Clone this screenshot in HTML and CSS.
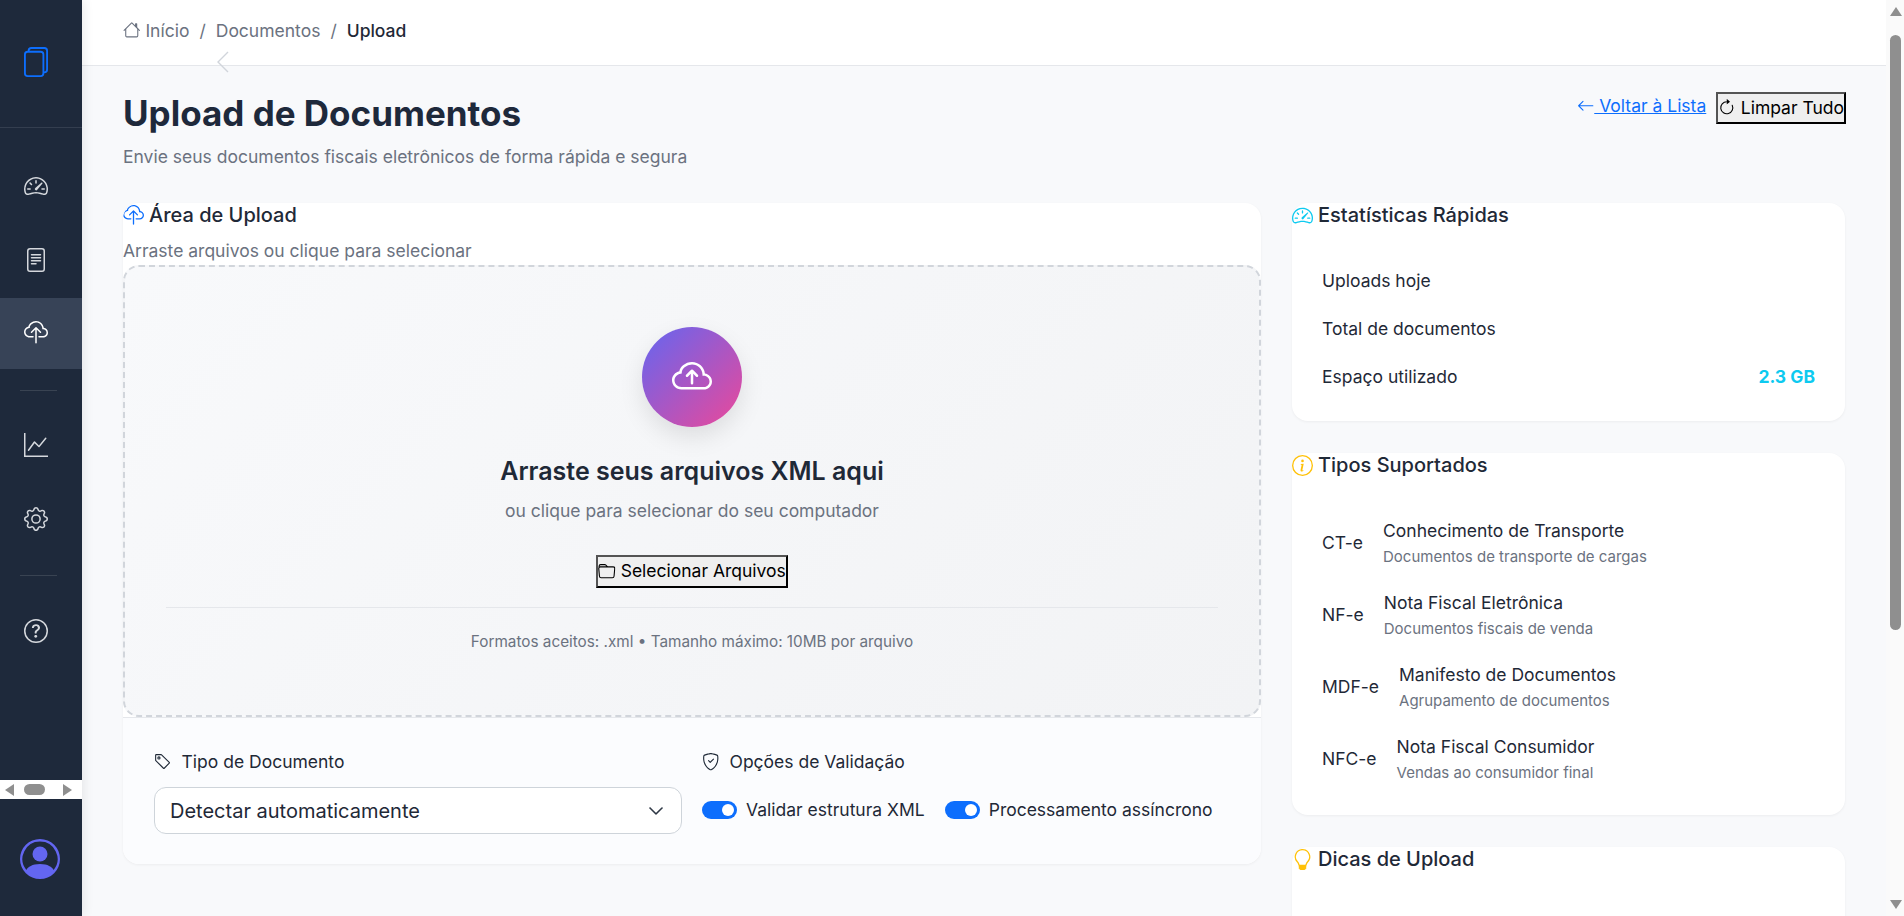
FILE: index.html
```html
<!DOCTYPE html>
<html lang="pt-BR">
<head>
<meta charset="utf-8">
<title>Upload de Documentos</title>
<link rel="stylesheet" href="styles.css">
</head>
<body>
<svg class="sprite" xmlns="http://www.w3.org/2000/svg">
  <symbol id="i-files" viewBox="2 0 13 16" preserveAspectRatio="none"><path d="M13 0H6a2 2 0 0 0-2 2 2 2 0 0 0-2 2v10a2 2 0 0 0 2 2h7a2 2 0 0 0 2-2 2 2 0 0 0 2-2V2a2 2 0 0 0-2-2zm0 13V4a2 2 0 0 0-2-2H5a1 1 0 0 1 1-1h7a1 1 0 0 1 1 1v10a1 1 0 0 1-1 1zM3 4a1 1 0 0 1 1-1h7a1 1 0 0 1 1 1v10a1 1 0 0 1-1 1H4a1 1 0 0 1-1-1V4z"/></symbol>
  <symbol id="i-speed" viewBox="0 0 16 16"><path d="M8 4a.5.5 0 0 1 .5.5V6a.5.5 0 0 1-1 0V4.5A.5.5 0 0 1 8 4zM3.732 5.732a.5.5 0 0 1 .707 0l.915.914a.5.5 0 1 1-.708.708l-.914-.915a.5.5 0 0 1 0-.707zM2 10a.5.5 0 0 1 .5-.5h1.586a.5.5 0 0 1 0 1H2.5A.5.5 0 0 1 2 10zm9.5 0a.5.5 0 0 1 .5-.5h1.5a.5.5 0 0 1 0 1H12a.5.5 0 0 1-.5-.5zm.754-4.246a.389.389 0 0 0-.527-.02L7.547 9.31a.91.91 0 1 0 1.302 1.258l3.434-4.297a.389.389 0 0 0-.029-.518z"/><path fill-rule="evenodd" d="M0 10a8 8 0 1 1 15.547 2.661c-.442 1.253-1.845 1.602-2.932 1.25C11.309 13.488 9.475 13 8 13c-1.474 0-3.31.488-4.615.911-1.087.352-2.49.003-2.932-1.25A7.988 7.988 0 0 1 0 10zm8-7a7 7 0 0 0-6.603 9.329c.203.575.923.876 1.68.63C4.397 12.533 6.358 12 8 12s3.604.532 4.923.96c.757.245 1.477-.056 1.68-.631A7 7 0 0 0 8 3z"/></symbol>
  <symbol id="i-file" viewBox="0 0 16 16"><path d="M5 4a.5.5 0 0 0 0 1h6a.5.5 0 0 0 0-1H5zm-.5 2.5A.5.5 0 0 1 5 6h6a.5.5 0 0 1 0 1H5a.5.5 0 0 1-.5-.5zM5 8a.5.5 0 0 0 0 1h6a.5.5 0 0 0 0-1H5zm0 2a.5.5 0 0 0 0 1h3a.5.5 0 0 0 0-1H5z"/><path d="M2 2a2 2 0 0 1 2-2h8a2 2 0 0 1 2 2v12a2 2 0 0 1-2 2H4a2 2 0 0 1-2-2V2zm10-1H4a1 1 0 0 0-1 1v12a1 1 0 0 0 1 1h8a1 1 0 0 0 1-1V2a1 1 0 0 0-1-1z"/></symbol>
  <symbol id="i-cloud" viewBox="0 0 16 16"><path fill-rule="evenodd" d="M4.406 1.342A5.53 5.53 0 0 1 8 0c2.69 0 4.923 2 5.166 4.579C14.758 4.804 16 6.137 16 7.773 16 9.569 14.502 11 12.687 11H10a.5.5 0 0 1 0-1h2.688C13.979 10 15 8.988 15 7.773c0-1.216-1.02-2.228-2.313-2.228h-.5v-.5C12.188 2.825 10.328 1 8 1a4.53 4.53 0 0 0-2.941 1.1c-.757.652-1.153 1.438-1.153 2.055v.448l-.445.049C2.064 4.805 1 5.952 1 7.318 1 8.785 2.23 10 3.781 10H6a.5.5 0 0 1 0 1H3.781C1.708 11 0 9.366 0 7.318c0-1.763 1.266-3.223 2.942-3.593.143-.863.698-1.723 1.464-2.383z"/><path fill-rule="evenodd" d="M7.646 4.146a.5.5 0 0 1 .708 0l3 3a.5.5 0 0 1-.708.708L8.5 5.707V14.5a.5.5 0 0 1-1 0V5.707L5.354 7.854a.5.5 0 1 1-.708-.708l3-3z"/></symbol>
  <symbol id="i-cloud-arrow" viewBox="0 0 16 16"><path fill-rule="evenodd" d="M7.646 5.146a.5.5 0 0 1 .708 0l2 2a.5.5 0 0 1-.708.708L8.5 6.707V10.5a.5.5 0 0 1-1 0V6.707L6.354 7.854a.5.5 0 1 1-.708-.708l2-2z"/><path d="M4.406 3.342A5.53 5.53 0 0 1 8 2c2.69 0 4.923 2 5.166 4.579C14.758 6.804 16 8.137 16 9.773 16 11.569 14.502 13 12.687 13H3.781C1.708 13 0 11.366 0 9.318c0-1.763 1.266-3.223 2.942-3.593.143-.863.698-1.723 1.464-2.383zm.653.757c-.757.653-1.153 1.44-1.153 2.056v.448l-.445.049C2.064 6.805 1 7.952 1 9.318 1 10.785 2.23 12 3.781 12h8.906C13.98 12 15 10.988 15 9.773c0-1.216-1.02-2.228-2.313-2.228h-.5v-.5C12.188 4.825 10.328 3 8 3a4.53 4.53 0 0 0-2.941 1.1z"/></symbol>
  <symbol id="i-graph" viewBox="0 0 16 16"><path fill-rule="evenodd" d="M0 0h1v15h15v1H0V0Zm14.817 3.113a.5.5 0 0 1 .07.704l-4.5 5.5a.5.5 0 0 1-.74.037L7.06 6.767l-3.656 5.027a.5.5 0 0 1-.808-.588l4-5.5a.5.5 0 0 1 .758-.06l2.609 2.61 4.15-5.073a.5.5 0 0 1 .704-.07Z"/></symbol>
  <symbol id="i-gear" viewBox="0 0 16 16"><path d="M8 4.754a3.246 3.246 0 1 0 0 6.492 3.246 3.246 0 0 0 0-6.492zM5.754 8a2.246 2.246 0 1 1 4.492 0 2.246 2.246 0 0 1-4.492 0z"/><path d="M9.796 1.343c-.527-1.79-3.065-1.79-3.592 0l-.094.319a.873.873 0 0 1-1.255.52l-.292-.16c-1.64-.892-3.433.902-2.54 2.541l.159.292a.873.873 0 0 1-.52 1.255l-.319.094c-1.79.527-1.79 3.065 0 3.592l.319.094a.873.873 0 0 1 .52 1.255l-.16.292c-.892 1.64.901 3.434 2.541 2.54l.292-.159a.873.873 0 0 1 1.255.52l.094.319c.527 1.79 3.065 1.79 3.592 0l.094-.319a.873.873 0 0 1 1.255-.52l.292.16c1.64.893 3.434-.902 2.54-2.541l-.159-.292a.873.873 0 0 1 .52-1.255l.319-.094c1.79-.527 1.79-3.065 0-3.592l-.319-.094a.873.873 0 0 1-.52-1.255l.16-.292c.893-1.64-.902-3.433-2.541-2.54l-.292.159a.873.873 0 0 1-1.255-.52l-.094-.319zm-2.633.283c.246-.835 1.428-.835 1.674 0l.094.319a1.873 1.873 0 0 0 2.693 1.115l.291-.16c.764-.415 1.6.42 1.184 1.185l-.159.292a1.873 1.873 0 0 0 1.116 2.692l.318.094c.835.246.835 1.428 0 1.674l-.319.094a1.873 1.873 0 0 0-1.115 2.693l.16.291c.415.764-.42 1.6-1.185 1.184l-.291-.159a1.873 1.873 0 0 0-2.693 1.116l-.094.318c-.246.835-1.428.835-1.674 0l-.094-.319a1.873 1.873 0 0 0-2.692-1.115l-.292.16c-.764.415-1.6-.42-1.184-1.185l.159-.291A1.873 1.873 0 0 0 1.945 8.93l-.319-.094c-.835-.246-.835-1.428 0-1.674l.319-.094A1.873 1.873 0 0 0 3.06 4.377l-.16-.292c-.415-.764.42-1.6 1.185-1.184l.292.159a1.873 1.873 0 0 0 2.692-1.115l.094-.319z"/></symbol>
  <symbol id="i-help" viewBox="0 0 16 16"><path d="M8 15A7 7 0 1 1 8 1a7 7 0 0 1 0 14zm0 1A8 8 0 1 0 8 0a8 8 0 0 0 0 16z"/><path d="M5.255 5.786a.237.237 0 0 0 .241.247h.825c.138 0 .248-.113.266-.25.09-.656.54-1.134 1.342-1.134.686 0 1.314.343 1.314 1.168 0 .635-.374.927-.965 1.371-.673.489-1.206 1.06-1.168 1.987l.003.217a.25.25 0 0 0 .25.246h.811a.25.25 0 0 0 .25-.25v-.105c0-.718.273-.927 1.01-1.486.609-.463 1.244-.977 1.244-2.056 0-1.511-1.276-2.241-2.673-2.241-1.267 0-2.655.59-2.75 2.286zm1.557 5.763c0 .533.425.927 1.01.927.609 0 1.028-.394 1.028-.927 0-.552-.42-.94-1.029-.94-.584 0-1.009.388-1.009.94z"/></symbol>
  <symbol id="i-person" viewBox="0 0 16 16"><path d="M11 6a3 3 0 1 1-6 0 3 3 0 0 1 6 0z"/><path fill-rule="evenodd" d="M0 8a8 8 0 1 1 16 0A8 8 0 0 1 0 8zm8-7a7 7 0 0 0-5.468 11.37C3.242 11.226 4.805 10 8 10s4.757 1.225 5.468 2.37A7 7 0 0 0 8 1z"/></symbol>
  <symbol id="i-house" viewBox="0 0 16 16"><path d="M8.707 1.5a1 1 0 0 0-1.414 0L.646 8.146a.5.5 0 0 0 .708.708L2 8.207V13.5A1.5 1.5 0 0 0 3.5 15h9a1.5 1.5 0 0 0 1.5-1.5V8.207l.646.647a.5.5 0 0 0 .708-.708L13 5.793V2.5a.5.5 0 0 0-.5-.5h-1a.5.5 0 0 0-.5.5v1.293L8.707 1.5ZM13 7.207V13.5a.5.5 0 0 1-.5.5h-9a.5.5 0 0 1-.5-.5V7.207l5-5 5 5Z"/></symbol>
  <symbol id="i-left" viewBox="0 0 16 16"><path fill-rule="evenodd" d="M15 8a.5.5 0 0 0-.5-.5H2.707l3.147-3.146a.5.5 0 1 0-.708-.708l-4 4a.5.5 0 0 0 0 .708l4 4a.5.5 0 0 0 .708-.708L2.707 8.5H14.5A.5.5 0 0 0 15 8z"/></symbol>
  <symbol id="i-reset" viewBox="0 0 16 16"><path fill-rule="evenodd" d="M8 3a5 5 0 1 0 4.546 2.914.5.5 0 0 1 .908-.417A6 6 0 1 1 8 2v1z"/><path d="M8 4.466V.534a.25.25 0 0 1 .41-.192l2.36 1.966c.12.1.12.284 0 .384L8.41 4.658A.25.25 0 0 1 8 4.466z"/></symbol>
  <symbol id="i-folder" viewBox="0 0 16 16"><path d="M.54 3.87.5 3a2 2 0 0 1 2-2h3.672a2 2 0 0 1 1.414.586l.828.828A2 2 0 0 0 9.828 3h3.982a2 2 0 0 1 1.992 2.181l-.637 7A2 2 0 0 1 13.174 14H2.826a2 2 0 0 1-1.991-1.819l-.637-7a1.99 1.99 0 0 1 .342-1.31zM2.19 4a1 1 0 0 0-.996 1.09l.637 7a1 1 0 0 0 .995.91h10.348a1 1 0 0 0 .995-.91l.637-7A1 1 0 0 0 13.81 4H2.19zm4.69-1.707A1 1 0 0 0 6.172 2H2.5a1 1 0 0 0-1 .981l.006.139C1.72 3.042 1.95 3 2.19 3h5.396l-.707-.707z"/></symbol>
  <symbol id="i-tag" viewBox="0 0 16 16"><path d="M6 4.5a1.5 1.5 0 1 1-3 0 1.5 1.5 0 0 1 3 0zm-1 0a.5.5 0 1 0-1 0 .5.5 0 0 0 1 0z"/><path d="M2 1h4.586a1 1 0 0 1 .707.293l7 7a1 1 0 0 1 0 1.414l-4.586 4.586a1 1 0 0 1-1.414 0l-7-7A1 1 0 0 1 1 6.586V2a1 1 0 0 1 1-1zm0 5.586 7 7L13.586 9l-7-7H2v4.586z"/></symbol>
  <symbol id="i-shield" viewBox="0 0 16 16"><path d="M5.338 1.59a61.44 61.44 0 0 0-2.837.856.481.481 0 0 0-.328.39c-.554 4.157.726 7.19 2.253 9.188a10.725 10.725 0 0 0 2.287 2.233c.346.244.652.42.893.533.12.057.218.095.293.118a.55.55 0 0 0 .101.025.615.615 0 0 0 .1-.025c.076-.023.174-.061.294-.118.24-.113.547-.29.893-.533a10.726 10.726 0 0 0 2.287-2.233c1.527-1.997 2.807-5.031 2.253-9.188a.48.48 0 0 0-.328-.39c-.651-.213-1.75-.56-2.837-.855C9.552 1.29 8.531 1.067 8 1.067c-.53 0-1.552.223-2.662.524zM5.072.56C6.157.265 7.31 0 8 0s1.843.265 2.928.56c1.11.3 2.229.655 2.887.87a1.54 1.54 0 0 1 1.044 1.262c.596 4.477-.787 7.795-2.465 9.99a11.775 11.775 0 0 1-2.517 2.453 7.159 7.159 0 0 1-1.048.625c-.28.132-.581.24-.829.24s-.548-.108-.829-.24a7.158 7.158 0 0 1-1.048-.625 11.777 11.777 0 0 1-2.517-2.453C1.928 10.487.545 7.169 1.141 2.692A1.54 1.54 0 0 1 2.185 1.43 62.456 62.456 0 0 1 5.072.56z"/><path d="M10.854 5.146a.5.5 0 0 1 0 .708l-3 3a.5.5 0 0 1-.708 0l-1.5-1.5a.5.5 0 1 1 .708-.708L7.5 7.793l2.646-2.647a.5.5 0 0 1 .708 0z"/></symbol>
  <symbol id="i-info" viewBox="0 0 16 16"><path d="M8 15A7 7 0 1 1 8 1a7 7 0 0 1 0 14zm0 1A8 8 0 1 0 8 0a8 8 0 0 0 0 16z"/><path d="m8.93 6.588-2.29.287-.082.38.45.083c.294.07.352.176.288.469l-.738 3.468c-.194.897.105 1.319.808 1.319.545 0 1.178-.252 1.465-.598l.088-.42c-.2.176-.492.246-.686.246-.275 0-.375-.193-.304-.533L8.93 6.588zM9 4.5a1 1 0 1 1-2 0 1 1 0 0 1 2 0z"/></symbol>
  <symbol id="i-bulb" viewBox="0 0 16 16"><path d="M2 6a6 6 0 1 1 10.174 4.31c-.203.196-.359.4-.453.619l-.762 1.769A.5.5 0 0 1 10.5 13a.5.5 0 0 1 0 1 .5.5 0 0 1 0 1l-.224.447a1 1 0 0 1-.894.553H6.618a1 1 0 0 1-.894-.553L5.5 15a.5.5 0 0 1 0-1 .5.5 0 0 1 0-1 .5.5 0 0 1-.46-.302l-.761-1.77a1.964 1.964 0 0 0-.453-.618A5.984 5.984 0 0 1 2 6zm6-5a5 5 0 0 0-3.479 8.592c.263.254.514.564.676.941L5.83 12h4.342l.632-1.467c.162-.377.413-.687.676-.941A5 5 0 0 0 8 1z"/></symbol>
  <symbol id="i-down" viewBox="0 0 16 16"><path fill-rule="evenodd" d="M1.646 4.646a.5.5 0 0 1 .708 0L8 10.293l5.646-5.647a.5.5 0 0 1 .708.708l-6 6a.5.5 0 0 1-.708 0l-6-6a.5.5 0 0 1 0-.708z"/></symbol>
</svg>

<div class="app">
  <aside class="sidebar">
    <div class="brand"><svg class="brand-icon"><use href="#i-files"/></svg></div>
    <nav class="nav">
      <a class="nav-item"><svg class="nav-icon"><use href="#i-speed"/></svg></a>
      <a class="nav-item"><svg class="nav-icon"><use href="#i-file"/></svg></a>
      <a class="nav-item is-active"><svg class="nav-icon"><use href="#i-cloud"/></svg></a>
      <hr class="nav-sep">
      <a class="nav-item"><svg class="nav-icon"><use href="#i-graph"/></svg></a>
      <a class="nav-item"><svg class="nav-icon"><use href="#i-gear"/></svg></a>
      <hr class="nav-sep">
      <a class="nav-item"><svg class="nav-icon"><use href="#i-help"/></svg></a>
    </nav>
    <div class="hscroll">
      <span class="hscroll-left"></span>
      <span class="hscroll-thumb"></span>
      <span class="hscroll-right"></span>
    </div>
    <div class="account"><svg class="avatar"><use href="#i-person"/></svg></div>
  </aside>

  <div class="main">
    <header class="topbar">
      <ol class="crumbs">
        <li class="crumb"><svg class="crumb-icon"><use href="#i-house"/></svg> Início</li>
        <li class="crumb-sep">/</li>
        <li class="crumb">Documentos</li>
        <li class="crumb-sep">/</li>
        <li class="crumb crumb-current">Upload</li>
      </ol>
      <svg class="collapse" viewBox="0 0 12 22"><polyline points="11,1 1,11 11,21"/></svg>
    </header>

    <main class="content">
      <div class="page-head">
        <div>
          <h1 class="page-title">Upload de Documentos</h1>
          <p class="page-sub">Envie seus documentos fiscais eletrônicos de forma rápida e segura</p>
        </div>
        <div class="page-actions">
          <a class="back-link" href="#"><svg class="icon16"><use href="#i-left"/></svg> Voltar à Lista</a>
          <button class="raw-btn" type="button"><svg class="icon16"><use href="#i-reset"/></svg>Limpar Tudo</button>
        </div>
      </div>

      <div class="columns">
        <section class="card upload-card">
          <h2 class="card-title"><svg class="title-icon c-blue"><use href="#i-cloud"/></svg>Área de Upload</h2>
          <p class="card-sub">Arraste arquivos ou clique para selecionar</p>
          <div class="dropzone">
            <div class="drop-circle"><svg class="drop-cloud"><use href="#i-cloud-arrow"/></svg></div>
            <h3 class="drop-title">Arraste seus arquivos XML aqui</h3>
            <p class="drop-sub">ou clique para selecionar do seu computador</p>
            <button class="raw-btn" type="button"><svg class="icon16"><use href="#i-folder"/></svg>Selecionar Arquivos</button>
            <p class="drop-note">Formatos aceitos: .xml • Tamanho máximo: 10MB por arquivo</p>
          </div>
          <div class="upload-options">
            <div class="option-col">
              <div class="option-label"><svg class="icon16"><use href="#i-tag"/></svg>Tipo de Documento</div>
              <div class="select-wrap">
                <select class="doc-select">
                  <option>Detectar automaticamente</option>
                </select>
                <svg class="select-chevron"><use href="#i-down"/></svg>
              </div>
            </div>
            <div class="option-col option-col-right">
              <div class="option-label"><svg class="icon16"><use href="#i-shield"/></svg>Opções de Validação</div>
              <div class="toggles">
                <label class="toggle"><span class="switch"></span>Validar estrutura XML</label>
                <label class="toggle"><span class="switch"></span>Processamento assíncrono</label>
              </div>
            </div>
          </div>
        </section>

        <div class="side">
          <section class="card stats-card">
            <h2 class="card-title"><svg class="title-icon c-cyan"><use href="#i-speed"/></svg>Estatísticas Rápidas</h2>
            <ul class="stats">
              <li class="stat">Uploads hoje</li>
              <li class="stat">Total de documentos</li>
              <li class="stat">Espaço utilizado <b class="stat-value">2.3 GB</b></li>
            </ul>
          </section>
          <section class="card types-card">
            <h2 class="card-title"><svg class="title-icon c-amber"><use href="#i-info"/></svg>Tipos Suportados</h2>
            <ul class="types">
              <li class="type"><span class="type-code">CT-e</span><div><div class="type-name">Conhecimento de Transporte</div><div class="type-desc">Documentos de transporte de cargas</div></div></li>
              <li class="type"><span class="type-code">NF-e</span><div><div class="type-name">Nota Fiscal Eletrônica</div><div class="type-desc">Documentos fiscais de venda</div></div></li>
              <li class="type"><span class="type-code">MDF-e</span><div><div class="type-name">Manifesto de Documentos</div><div class="type-desc">Agrupamento de documentos</div></div></li>
              <li class="type"><span class="type-code">NFC-e</span><div><div class="type-name">Nota Fiscal Consumidor</div><div class="type-desc">Vendas ao consumidor final</div></div></li>
            </ul>
          </section>
          <section class="card tips-card">
            <h2 class="card-title"><svg class="title-icon c-amber"><use href="#i-bulb"/></svg>Dicas de Upload</h2>
          </section>
        </div>
      </div>
    </main>
  </div>

  <div class="vscroll">
    <span class="vscroll-up"></span>
    <span class="vscroll-thumb"></span>
    <span class="vscroll-down"></span>
  </div>
</div>
</body>
</html>
```

FILE: styles.css
```css
* { box-sizing: border-box; }
html, body { margin: 0; height: 100%; overflow: hidden; }
body { font-family: Inter, "Liberation Sans", sans-serif; font-size: 17.5px; line-height: 1.5; color: #1f2937; background: #f8f9fb; }
svg { fill: currentColor; }
.sprite { display: none; }

.app { display: flex; height: 916px; overflow: hidden; }

/* Sidebar */
.sidebar { width: 82px; flex: none; display: flex; flex-direction: column; background: #1e293b; color: #d5d8dd; box-shadow: 2px 0 10px rgba(0,0,0,.08); z-index: 2; }
.brand { height: 128px; flex: none; padding: 47px 0 0 24px; border-bottom: 1px solid rgba(255,255,255,.1); }
.brand-icon { display: block; width: 24px; height: 30px; color: #0d6efd; }
.nav { flex: 1; padding-top: 22px; display: flex; flex-direction: column; gap: 3px; }
.nav-item { height: 71px; flex: none; display: flex; align-items: center; padding-left: 24px; }
.nav-item.is-active { background: #374357; color: #fff; padding-bottom: 2px; }
.nav-icon { width: 24px; height: 24px; }
.nav-sep { width: 37px; height: 1px; margin: 17.5px 0 16px 20px; border: 0; background: rgba(255,255,255,.12); flex: none; }

.hscroll { height: 19px; flex: none; background: #fff; display: flex; align-items: center; position: relative; }
.hscroll-left { margin-left: 5px; border-style: solid; border-width: 6px 9px 6px 0; border-color: transparent #8f8f8f transparent transparent; }
.hscroll-thumb { margin-left: 10px; width: 21px; height: 11px; border-radius: 6px; background: #8f8f8f; }
.hscroll-right { margin-left: 18px; border-style: solid; border-width: 6px 0 6px 9px; border-color: transparent transparent transparent #8f8f8f; }
.account { height: 117px; flex: none; padding: 40px 0 0 20px; }
.avatar { display: block; width: 40px; height: 40px; color: #6366f1; }

/* Main */
.main { flex: 1; min-width: 0; display: flex; flex-direction: column; }
.topbar { height: 66px; flex: none; background: #fff; border-bottom: 1px solid #e5e7eb; padding: 18px 41px 0; position: relative; }
.crumbs { list-style: none; margin: 0; padding: 0; display: flex; gap: 10px; color: #6b7280; }
.crumb-icon { width: 17.5px; height: 17.5px; vertical-align: -1.5px; }
.crumb-current { color: #1f2937; font-weight: 500; }
.collapse { position: absolute; left: 135px; top: 51px; width: 12px; height: 22px; fill: none; stroke: #d1d5db; stroke-width: 1.4; }

.content { flex: 1; min-height: 0; padding: 0 41px; overflow: hidden; }
.page-head { display: flex; justify-content: space-between; align-items: flex-start; padding-top: 26px; height: 137px; }
.page-title { margin: 0; font-size: 35px; font-weight: 700; line-height: 42px; color: #1e293b; }
.page-sub { margin: 10px 0 0; color: #6b7280; }
.page-actions { display: flex; align-items: flex-start; gap: 10px; margin-right: -1px; }
.back-link { color: #0d6efd; margin-top: 1px; }
.back-link .icon16 { vertical-align: -2px; }
.icon16 { width: 17.5px; height: 17.5px; flex: none; }

.raw-btn { display: inline-flex; align-items: center; gap: 5px; padding: 1px 0; font: inherit; color: #000; background: #efefef; border: 2px outset #000; }

.columns { display: grid; grid-template-columns: 1fr 553px; gap: 31px; align-items: start; }
.card { background: #fff; border-radius: 16px; box-shadow: 0 1px 3px rgba(0,0,0,.05); }
.card-title { display: flex; align-items: center; gap: 5px; margin: 0; font-size: 20px; font-weight: 500; line-height: 24px; color: #1f2937; }
.title-icon { width: 21px; height: 21px; flex: none; }
.c-blue { color: #0d6efd; }
.c-cyan { color: #0dcaf0; }
.c-amber { color: #ffc107; }
.card-sub { margin: 11px 0 .75px; color: #6b7280; }

/* Dropzone */
.upload-card { overflow: hidden; }
.dropzone { height: 452px; padding: 60px 41px 0; border: 2px dashed #d1d5db; border-radius: 16px; background: linear-gradient(135deg, #f8f9fb, #f2f3f5); display: flex; flex-direction: column; align-items: center; }
.drop-circle { width: 100px; height: 100px; border-radius: 50%; flex: none; background: linear-gradient(135deg, #6366f1, #ec4899); box-shadow: 0 10px 25px rgba(0,0,0,.1); display: flex; align-items: center; justify-content: center; color: #fff; }
.drop-cloud { width: 40px; height: 40px; }
.drop-title { margin: 29px 0 0; font-size: 25px; font-weight: 600; line-height: 30px; color: #1f2937; }
.drop-sub { margin: 12px 0 0; color: #6b7280; }
.dropzone .raw-btn { margin-top: 31px; }
.drop-note { align-self: stretch; margin: 19.5px 0 0; padding-top: 22.5px; border-top: 1px solid #e5e7eb; text-align: center; font-size: 15.3px; color: #6b7280; }

.upload-options { display: flex; height: 147px; padding: 32px 31px 0; background: #fbfcfe; border-top: 1px solid #e5e7eb; }
.option-col { width: 528px; flex: none; }
.option-col-right { width: auto; margin-left: 20px; }
.option-label { display: flex; align-items: center; gap: 10px; height: 24px; color: #1f2937; font-weight: 400; }
.select-wrap { position: relative; margin-top: 13px; }
.doc-select { display: block; width: 100%; height: 47px; padding: 0 15px; appearance: none; font: inherit; font-size: 20px; color: #1f2937; background: #fff; border: 1px solid #ced4da; border-radius: 12px; }
.select-chevron { position: absolute; right: 18px; top: 16px; width: 16px; height: 16px; color: #1f2937; stroke: currentColor; stroke-width: .6; }
.toggles { display: flex; gap: 20px; margin-top: 23px; }
.toggle { display: flex; align-items: center; gap: 9px; color: #1f2937; }
.switch { width: 35px; height: 18px; border-radius: 9px; background: #0d6efd; position: relative; flex: none; }
.switch::after { content: ""; position: absolute; right: 3px; top: 3px; width: 12px; height: 12px; border-radius: 50%; background: #fff; }

/* Right column */
.side { display: flex; flex-direction: column; gap: 32px; }
.stats-card { height: 218px; }
.stats { list-style: none; margin: 0; padding: 30px 30px 0; display: flex; flex-direction: column; }
.stat { height: 48px; display: flex; align-items: center; justify-content: space-between; }
.stat-value { color: #0dcaf0; font-weight: 700; }
.types-card { height: 362px; }
.types { list-style: none; margin: 0; padding: 30px 30px 0; }
.type { height: 72px; display: flex; align-items: center; gap: 20px; }
.type-name { line-height: 26.25px; }
.type-desc { margin-top: 1.5px; font-size: 15px; line-height: 22.5px; color: #6b7280; }
.tips-card { height: 240px; }

/* Window scrollbar */
.vscroll { width: 18px; flex: none; background: #fafafa; position: relative; }
.vscroll-up, .vscroll-down { position: absolute; left: 4px; width: 0; height: 0; border-style: solid; border-color: transparent; }
.vscroll-up { top: 7px; border-width: 0 6px 9px; border-bottom-color: #8f8f8f; }
.vscroll-down { bottom: 7px; border-width: 9px 6px 0; border-top-color: #8f8f8f; }
.vscroll-thumb { position: absolute; left: 4px; top: 35px; width: 11px; height: 595px; border-radius: 6px; background: #8f8f8f; }
```
